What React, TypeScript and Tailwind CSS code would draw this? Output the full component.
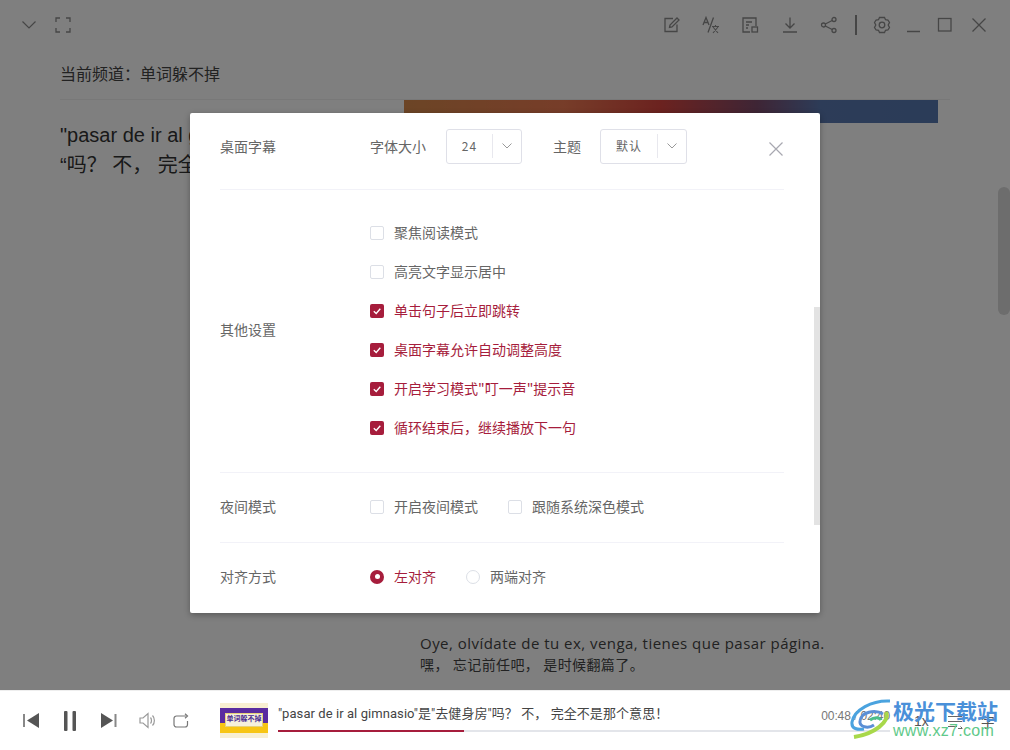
import React from "react";

const cjk = "font-['Noto_Sans_CJK_SC','Noto_Sans',sans-serif]";

const Check = ({ label, on = false }: { label: string; on?: boolean }) => (
    <label className="flex items-center">
        {on ? (
            <span className="flex h-[14px] w-[14px] items-center justify-center rounded-[2px] bg-[#a61d3c]">
                <svg width="10" height="10" viewBox="0 0 10 10" fill="none" stroke="#fff" strokeWidth="1.4">
                    <path d="M1.8 5.2 4.2 7.4 8.3 2.8" />
                </svg>
            </span>
        ) : (
            <span className="h-[14px] w-[14px] rounded-[2px] border border-[#dcdfe6] bg-white" />
        )}
        <span className={`ml-[10px] pb-[2px] text-[14px] leading-[20px] ${on ? "text-[#a61d3c]" : "text-[#666]"}`}>{label}</span>
    </label>
);

const Select = ({ value, w }: { value: string; w: string }) => (
    <div className={`flex h-[35px] items-center rounded-[3px] border border-[#dfe0e8] bg-white ${w}`}>
        <span className="flex-1 text-center text-[12px] tracking-[1px] text-[#666]">{value}</span>
        <span className="h-[24px] w-px bg-[#e8e8ee]" />
        <span className="flex w-[28px] justify-center">
            <svg width="10" height="6" viewBox="0 0 10 6" fill="none" stroke="#999" strokeWidth="1">
                <path d="M.5.5 5 5 9.500.5" />
            </svg>
        </span>
    </div>
);

const Section = ({
    title,
    className,
    titleClass = "",
    children,
}: {
    title: string;
    className: string;
    titleClass?: string;
    children: React.ReactNode;
}) => (
    <div className={`flex items-center border-b border-[#f2f2f8] ${className}`}>
        <span className={`w-[150px] shrink-0 text-[14px] text-[#666] ${titleClass}`}>{title}</span>
        {children}
    </div>
);

const TopIcon = ({ children, className = "" }: { children: React.ReactNode; className?: string }) => (
    <svg width="18" height="18" viewBox="0 0 18 18" fill="none" stroke="#8c8c8c" strokeWidth="1.3" className={className}>
        {children}
    </svg>
);

const Thumb = () => (
    <div className="relative h-[35px] w-[48px] shrink-0 bg-[#f8efd2]">
        <div className="absolute left-0 top-[5px] h-[15px] w-full bg-[#5a2ca0]" />
        <div className="absolute left-0 top-[20px] h-[10px] w-full bg-[#f7c514]" />
        <div className="absolute left-[5px] top-[10px] h-[14px] w-[38px] border border-[#e6d27a] bg-[#f5f0dc] text-center text-[7px] font-bold leading-[9px] text-[#4a2a90]">
            单词躲不掉
        </div>
    </div>
);

const App = () => {
    return (
        <div className={`relative flex h-[750px] w-[1010px] flex-col overflow-hidden bg-white ${cjk}`}>
            <main className="relative h-[690px] overflow-hidden">
                <header className="flex h-[50px] items-center pl-[20px] pr-[22px]">
                    <svg width="18" height="18" viewBox="0 0 18 18" fill="none" stroke="#8c8c8c" strokeWidth="1.2">
                        <path d="M2.500 5.500 9 12l6.500-6.500" />
                    </svg>
                    <TopIcon className="ml-[16px]">
                        <path d="M2 6V2h4M12 2h4v4M16 12v4h-4M6 16H2v-4" />
                    </TopIcon>
                    <div className="flex-1" />
                    <TopIcon>
                        <path d="M14 8.500V15.500H2V2.500h8" />
                        <path d="M6.500 11.500l.5-2.500L14 2l2 2-7 7-2.500.5z" />
                    </TopIcon>
                    <TopIcon className="ml-[21px]">
                        <path d="M1 9 4 1.500 7 9M2 6.500h4M11.500 1.500 6 16.500" />
                        <path d="M10 10.500h7M13.500 9v2M11 17l5-6M16 17l-5-6" strokeWidth="1.100" />
                    </TopIcon>
                    <TopIcon className="ml-[21px]">
                        <path d="M9 16H2V2h13v8" />
                        <path d="M5 6h6M5 9h3M5 12h2" />
                        <rect x="11" y="11" width="5.500" height="5" />
                    </TopIcon>
                    <TopIcon className="ml-[22px]">
                        <path d="M9 1.500V12M4.500 7.500 9 12l4.500-4.500M2 16h14" />
                    </TopIcon>
                    <TopIcon className="ml-[21px]">
                        <circle cx="3.500" cy="9" r="2" />
                        <circle cx="14" cy="3.500" r="2" />
                        <circle cx="14" cy="14.500" r="2" />
                        <path d="M5.300 8 12.200 4.500M5.300 10l6.900 3.500" />
                    </TopIcon>
                    <span className="ml-[17px] h-[20px] w-[2px] bg-[#8c8c8c]" />
                    <TopIcon className="ml-[16px]">
                        <path d="M6.500 1.500h5l1 2.200 2.400.3 1.600 2.500-1.300 2.500 1.300 2.500-1.600 2.500-2.400.3-1 2.200h-5l-1-2.200-2.400-.3L1.500 11.500 2.800 9 1.500 6.500 3.100 4l2.400-.3z" />
                        <circle cx="9" cy="9" r="2.800" />
                    </TopIcon>
                    <TopIcon className="ml-[14px]">
                        <path d="M2 15.500h13" strokeWidth="1.500" />
                    </TopIcon>
                    <TopIcon className="ml-[13px]">
                        <rect x="2.500" y="2.500" width="12.500" height="12.500" />
                    </TopIcon>
                    <TopIcon className="ml-[16px]">
                        <path d="M2.500 2.500l13 13M15.500 2.500l-13 13" />
                    </TopIcon>
                </header>
                <div className="pl-[60px] pr-[60px]">
                    <div className="flex h-[50px] items-center border-b border-[#f0f0f0] pb-[4px] text-[16px] text-[#444]">
                        当前频道：单词躲不掉
                    </div>
                    <div className="flex">
                        <div className="w-[344px] pt-[20px] font-['Liberation_Sans','Noto_Sans_CJK_SC',sans-serif] text-[20px] leading-[30px] text-[#333]">
                            <p className="whitespace-nowrap">"pasar de ir al gimnasio"</p>
                            <p className="whitespace-nowrap">“吗？ 不， 完全不是</p>
                        </div>
                        <div className="w-[534px]">
                            <div className="h-[23px] bg-[linear-gradient(90deg,#d88a4c_0%,#ee7a52_30%,#d8453f_48%,#7d4a6a_66%,#5a78b0_78%,#5679b0_100%)]" />
                            <div className="ml-[16px] mt-[509px] font-['Open_Sans','Noto_Sans_CJK_SC',sans-serif] leading-[22px] text-[#444]">
                                <p className="whitespace-nowrap text-[15px] tracking-[0.47px]">
                                    Oye, olvídate de tu ex, venga, tienes que pasar página.
                                </p>
                                <p className="whitespace-nowrap text-[14px] tracking-[0.4px]">嘿， 忘记前任吧， 是时候翻篇了。</p>
                            </div>
                        </div>
                    </div>
                </div>

                <div className="absolute inset-0 bg-black/50" />
                <div className="absolute right-0 top-[187px] h-[128px] w-[12px] rounded-[6px] bg-[#6d6d6d]" />

                <div className="absolute left-[190px] top-[113px] h-[500px] w-[630px] overflow-hidden rounded-[2px] bg-white shadow-[0_2px_6px_rgba(0,0,0,0.3)]">
                    <div className="absolute right-0 top-[194px] h-[218px] w-[6px] bg-[#e3e3e3]" />
                    <svg
                        className="absolute left-[579px] top-[29px]"
                        width="14"
                        height="14"
                        viewBox="0 0 14 14"
                        fill="none"
                        stroke="#a8a8b0"
                        strokeWidth="1.2"
                    >
                        <path d="M.5.5l13 13M13.500.5l-13 13" />
                    </svg>
                    <div className="pl-[30px] pr-[36px]">
                        <Section title="桌面字幕" className="h-[77px] pt-[12px] pb-[22px]">
                            <span className="mr-[20px] text-[14px] text-[#666]">字体大小</span>
                            <Select value="24" w="w-[76px]" />
                            <span className="ml-[31px] mr-[19px] text-[14px] text-[#666]">主题</span>
                            <Select value="默认" w="w-[87px]" />
                        </Section>
                        <Section title="其他设置" titleClass="pb-[2px]" className="h-[283px] pb-[2px]">
                            <div className="flex flex-col gap-[17px]">
                                <Check label="聚焦阅读模式" />
                                <Check label="高亮文字显示居中" />
                                <Check label="单击句子后立即跳转" on />
                                <Check label="桌面字幕允许自动调整高度" on />
                                <Check label={'开启学习模式"叮一声"提示音'} on />
                                <Check label="循环结束后，继续播放下一句" on />
                            </div>
                        </Section>
                        <Section title="夜间模式" className="h-[70px] pb-[2px]">
                            <div className="flex gap-[30px]">
                                <Check label="开启夜间模式" />
                                <Check label="跟随系统深色模式" />
                            </div>
                        </Section>
                        <div className="flex h-[69px] items-center pb-[2px]">
                            <span className="w-[150px] shrink-0 text-[14px] text-[#666]">对齐方式</span>
                            <div className="flex items-center">
                                <span className="flex h-[14px] w-[14px] items-center justify-center rounded-full bg-[#a61d3c]">
                                    <span className="h-[5px] w-[5px] rounded-full bg-white" />
                                </span>
                                <span className="ml-[10px] text-[14px] text-[#a61d3c]">左对齐</span>
                                <span className="ml-[30px] h-[14px] w-[14px] rounded-full border border-[#dcdfe6]" />
                                <span className="ml-[10px] text-[14px] text-[#666]">两端对齐</span>
                            </div>
                        </div>
                    </div>
                </div>
            </main>

            <footer className="flex h-[60px] items-center border-t border-[#eee] bg-white pl-[23px]">
                <svg width="17" height="15" viewBox="0 0 17 15" fill="#555">
                    <rect x="0" y="1" width="2" height="13" fill="#888" />
                    <path d="M16 0v15L4 7.500z" />
                </svg>
                <svg className="ml-[23px]" width="14" height="20" viewBox="0 0 14 20" fill="#555">
                    <rect x="1" y="0" width="3.500" height="20" rx="1" />
                    <rect x="9.500" y="0" width="3.500" height="20" rx="1" />
                </svg>
                <svg className="ml-[23px]" width="17" height="15" viewBox="0 0 17 15" fill="#555">
                    <path d="M1 0v15l12-7.500z" />
                    <rect x="14.500" y="1" width="2" height="13" fill="#888" />
                </svg>
                <svg className="ml-[22px]" width="17" height="17" viewBox="0 0 17 17" fill="none" stroke="#999" strokeWidth="1.200">
                    <path d="M1 6v5h3l5 4.500V1.500L4 6zM11.500 5.500c1.300 1.500 1.300 4.500 0 6M13.500 3.500c2.500 2.500 2.500 7.500 0 10" />
                </svg>
                <svg className="ml-[17px]" width="16" height="16" viewBox="0 0 16 16" fill="none" stroke="#777" strokeWidth="1.200">
                    <path d="M13 3H3.500A2.500 2.500 0 0 0 1 5.500v6A2.500 2.500 0 0 0 3.500 14H12a2.500 2.500 0 0 0 2.500-2.500V8" />
                    <path d="M12 .800 14.500 3 12 5.200" />
                </svg>
                <div className="ml-[31px]">
                    <Thumb />
                </div>
                <div className="mb-[8px] ml-[10px] flex w-[612px] flex-col">
                    <div className="flex h-[25px] items-center justify-between">
                        <span className="whitespace-nowrap text-[13px] tracking-[0.07px] text-[#444] font-['Roboto','Noto_Sans_CJK_SC',sans-serif]">
                            "pasar de ir al gimnasio"是"去健身房"吗？ 不， 完全不是那个意思！
                        </span>
                        <span className="mt-[4px] whitespace-nowrap text-[12px] tracking-[-0.1px] text-[#777] font-['Liberation_Sans',sans-serif]">00:48 / 02:40</span>
                    </div>
                    <div className="mt-[3px] h-[2px] bg-[#e3e5ea]">
                        <div className="h-[2px] w-[186px] bg-[#a61d3c]" />
                    </div>
                </div>
                <span className="ml-[24px] mt-[2px] text-[14px] text-[#555] font-['Liberation_Sans',sans-serif]">1x</span>
                <svg className="ml-[18px] mt-[2px]" width="16" height="16" viewBox="0 0 16 16" fill="none" stroke="#666">
                    <path d="M1 2.500h14M1 7.500h14M1 12.500h9M11 14.500h4M13.500 12.500l2 2" />
                </svg>
                <span className="ml-[18px] mt-[2px] text-[14px] text-[#555]">字</span>
            </footer>

            <div className="absolute left-[850px] top-[698px] flex items-center">
                <svg width="42" height="42" viewBox="0 0 42 42" fill="none">
                    <path d="M40 3C22 2 4 12 2 24c-1 7 6 8 12 7" stroke="#4aa3df" strokeWidth="3" />
                    <path d="M33 16c-8-5-22-2-23 7-1 6 8 8 14 4" stroke="#5b8fd6" strokeWidth="3" />
                    <path d="M36 14c4 10-12 22-32 25" stroke="#a8d84a" strokeWidth="4" />
                    <path d="M20 22c4-3 9-3 11 0" stroke="#4bbf8a" strokeWidth="3" />
                </svg>
                <div className="ml-[1px] -mt-[3px] flex flex-col">
                    <span className="text-[21px] font-bold leading-[26px] text-[#4a90d9]">极光下载站</span>
                    <span className="text-[16px] font-['Liberation_Sans',sans-serif] leading-[16px] tracking-[0.3px] text-[#5fc98a]">www.xz7.com</span>
                </div>
            </div>
        </div>
    );
};

export default App;
